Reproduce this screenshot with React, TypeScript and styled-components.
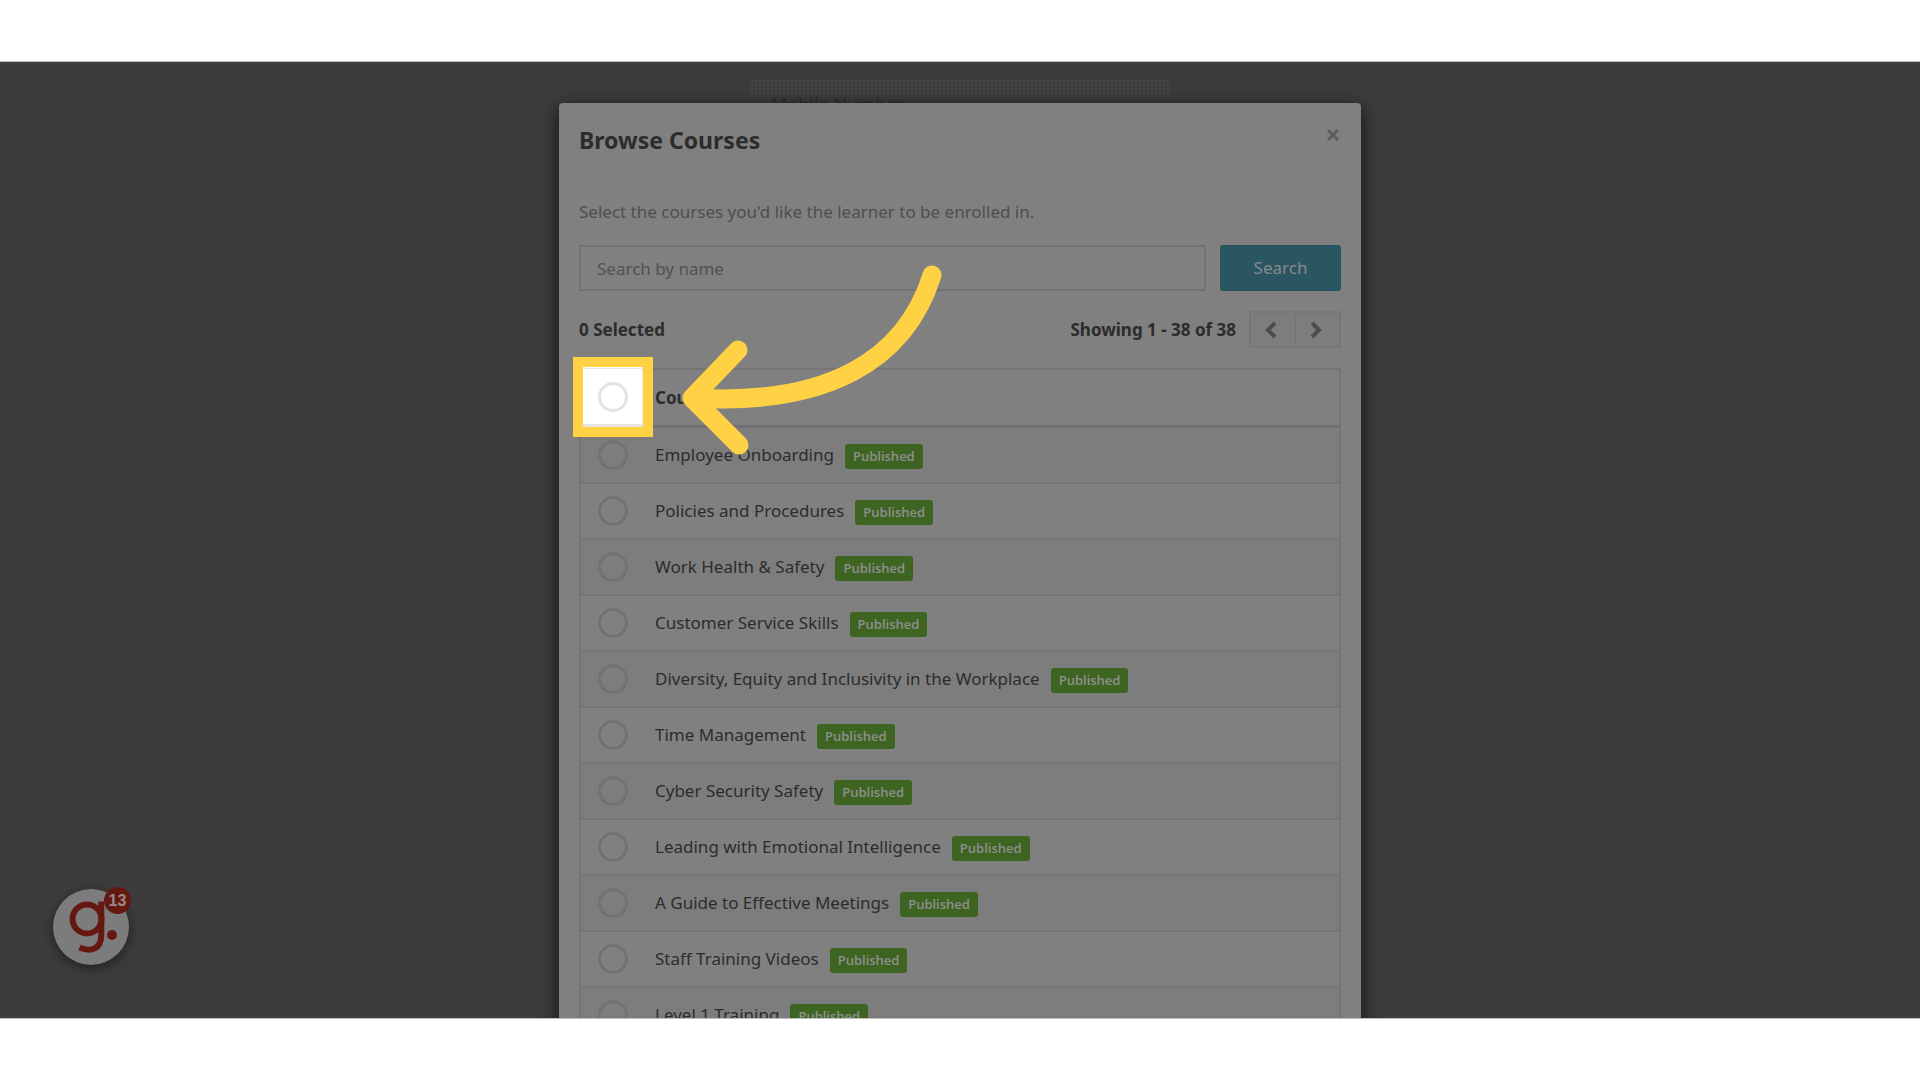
import React from "react";
import styled, { createGlobalStyle } from "styled-components";

const GlobalStyle = createGlobalStyle`
  *, *::before, *::after { box-sizing: border-box; }
  body {
    margin: 0;
    background: #ffffff;
    font-family: "Noto Sans", "Open Sans", sans-serif;
    font-size: 17px;
    line-height: 24px;
    color: #2c2c2c;
  }
`;

const Page = styled.main`
  height: 100vh;
  padding: 61px 0;
  overflow: hidden;
`;

const Stage = styled.div`
  position: relative;
  height: 100%;
  overflow: hidden;
  background: #3c3c3c;
  border-top: 1px solid #bdbdbd;
  border-bottom: 1px solid #bdbdbd;
`;

const Backdrop = styled.div`
  position: absolute;
  top: 18px;
  left: 50%;
  width: 418px;
  transform: translateX(-50%);
  color: #2c2c2c;
`;

const BackdropField = styled.div`
  height: 14px;
  background: radial-gradient(circle at 1px 1px, #494949 1px, transparent 1px) 0 0 / 4px 4px;
`;

const BackdropLabel = styled.div`
  padding: 0 20px;
  font-size: 18px;
  line-height: 20px;
`;

const Dialog = styled.section`
  position: relative;
  width: 802px;
  max-width: 100%;
  margin: 41px auto 0;
  padding: 20px;
  background: #808080;
  border-radius: 4px;
  box-shadow: 0 6px 18px 2px rgba(0, 0, 0, 0.6);
`;

const DialogHeader = styled.header`
  display: flex;
  justify-content: space-between;
  align-items: flex-start;
  height: 77px;
`;

const Title = styled.h1`
  margin: 0;
  font-size: 23px;
  line-height: 34px;
  font-weight: 700;
`;

const CloseButton = styled.button`
  width: 16px;
  height: 24px;
  padding: 0;
  border: 0;
  background: none;
  color: #5c5f58;
`;

const Intro = styled.p`
  margin: 0 0 21px;
  color: #4e4e4e;
`;

const SearchForm = styled.form`
  display: flex;
  gap: 14px;
  margin-bottom: 20px;
`;

const SearchInput = styled.input`
  flex: 1;
  min-width: 0;
  height: 46px;
  padding: 0 16px;
  border: 2px solid #727272;
  border-radius: 2px;
  background: transparent;
  font: inherit;
  color: #2c2c2c;
  &::placeholder { color: #515151; opacity: 1; }
`;

const SearchButton = styled.button`
  width: 121px;
  height: 46px;
  border: 0;
  border-radius: 3px;
  background: #2a5661;
  color: #898989;
  font: inherit;
`;

const Summary = styled.div`
  display: flex;
  align-items: center;
  justify-content: space-between;
  margin-bottom: 20px;
  font-weight: 700;
`;

const Paging = styled.div`
  display: flex;
  align-items: center;
  gap: 13px;
`;

const Pager = styled.div`
  display: flex;
  border: 2px solid #777777;
`;

const PagerButton = styled.button`
  display: flex;
  align-items: center;
  justify-content: center;
  width: 44px;
  height: 33px;
  padding: 0 4px 0 0;
  border: 0;
  background: #7d7d7d;
  color: #4c4c4c;
  & + & { border-left: 1px solid #747474; }
`;

const CourseTable = styled.table`
  width: 100%;
  border-collapse: separate;
  border-spacing: 0;
  border: 2px solid #757575;
  border-bottom: 0;
`;

const HeadCell = styled.th`
  height: 58px;
  padding: 0 0 0 12px;
  border-bottom: 3px solid #717171;
  text-align: left;
`;

const HeadSelectCell = styled(HeadCell)`
  position: relative;
  width: 62px;
`;

const Row = styled.tr`
  &:nth-child(odd) { background: #7d7d7d; }
`;

const Cell = styled.td`
  height: 56px;
  padding: 0 0 0 12px;
  border-bottom: 2px solid #757575;
`;

const SelectCell = styled(Cell)`
  padding-left: 17px;
`;

const Check = styled.input<{ $lit?: boolean }>`
  appearance: none;
  display: block;
  width: 30px;
  height: 30px;
  margin: 0;
  border: 3px solid ${(p) => (p.$lit ? "#e5e3db" : "#727272")};
  border-radius: 50%;
`;

const CourseLine = styled.div`
  display: flex;
  align-items: center;
  gap: 11px;
`;

const Badge = styled.span`
  height: 25px;
  margin-top: 3px;
  padding: 0 8px;
  border-radius: 3px;
  background: #3e6421;
  color: #8f8f8f;
  font-family: "Open Sans", "Noto Sans", sans-serif;
  font-size: 13px;
  line-height: 25px;
  font-weight: 600;
`;

const Spotlight = styled.div`
  position: absolute;
  z-index: 1;
  top: -13px;
  left: -8px;
  width: 80px;
  height: 80px;
  padding-top: 1px;
  border: 10px solid #ffd145;
  background: #ffffff;
`;

const SpotlightCell = styled.div`
  display: flex;
  align-items: center;
  justify-content: center;
  height: 59px;
  border-top: 1px solid #e8e8e8;
  border-right: 1px solid #e8e8e8;
  border-bottom: 3px solid #e6e3e0;
`;

const Arrow = styled.svg`
  position: absolute;
  z-index: 2;
  top: -106px;
  left: 100px;
  pointer-events: none;
`;

const ChatLauncher = styled.button`
  position: absolute;
  left: 53px;
  bottom: 53px;
  width: 76px;
  height: 76px;
  padding: 0;
  border: 0;
  border-radius: 50%;
  background: #7c7c7c;
  box-shadow: 0 3px 12px rgba(0, 0, 0, 0.5);
`;

const UnreadCount = styled.span`
  position: absolute;
  top: -2px;
  right: -2px;
  width: 27px;
  height: 27px;
  border-radius: 50%;
  background: #651812;
  color: #9a8a88;
  font: 700 16px/27px "Liberation Sans", Arial, sans-serif;
`;

const courses = [
  "Employee Onboarding",
  "Policies and Procedures",
  "Work Health & Safety",
  "Customer Service Skills",
  "Diversity, Equity and Inclusivity in the Workplace",
  "Time Management",
  "Cyber Security Safety",
  "Leading with Emotional Intelligence",
  "A Guide to Effective Meetings",
  "Staff Training Videos",
  "Level 1 Training",
];

function CloseIcon() {
  return (
    <svg width="14" height="14" viewBox="0 0 14 14" aria-hidden="true">
      <path d="M2 3l10 10M12 3L2 13" stroke="currentColor" strokeWidth="3" />
    </svg>
  );
}

function Chevron({ direction }: { direction: "left" | "right" }) {
  return (
    <svg width="12" height="18" viewBox="0 0 12 18" aria-hidden="true">
      <path
        d={direction === "left" ? "M10 2L3 9l7 7" : "M2 2l7 7-7 7"}
        fill="none"
        stroke="currentColor"
        strokeWidth="4"
      />
    </svg>
  );
}

function GuideArrow() {
  return (
    <Arrow width="262" height="192" viewBox="0 0 262 192" aria-hidden="true">
      <g fill="none" stroke="#ffd145" strokeWidth="19" strokeLinecap="round" strokeLinejoin="round">
        <path d="M251 11C224 98 144 142 12 134" />
        <path d="M57 86L11 134L58 181" />
      </g>
    </Arrow>
  );
}

function BrandMark() {
  return (
    <svg width="76" height="76" viewBox="0 0 76 76" aria-hidden="true">
      <g fill="none" stroke="#651812" strokeWidth="6">
        <circle cx="34" cy="30" r="14.5" />
        <path d="M48.3 12.5V46C48.3 60 38 63.5 26.5 58.5" />
      </g>
      <circle cx="59" cy="46" r="5" fill="#651812" />
    </svg>
  );
}

export default function App() {
  return (
    <>
      <GlobalStyle />
      <Page>
        <Stage>
          <Backdrop>
            <BackdropField />
            <BackdropLabel>Mobile Number</BackdropLabel>
          </Backdrop>
          <Dialog aria-labelledby="dialog-title">
            <DialogHeader>
              <Title id="dialog-title">Browse Courses</Title>
              <CloseButton aria-label="Close">
                <CloseIcon />
              </CloseButton>
            </DialogHeader>
            <Intro>Select the courses you'd like the learner to be enrolled in.</Intro>
            <SearchForm onSubmit={(e) => e.preventDefault()}>
              <SearchInput type="text" aria-label="Search by name" placeholder="Search by name" />
              <SearchButton type="submit">Search</SearchButton>
            </SearchForm>
            <Summary>
              <span>0 Selected</span>
              <Paging>
                <span>Showing 1 - 38 of 38</span>
                <Pager>
                  <PagerButton aria-label="Previous page">
                    <Chevron direction="left" />
                  </PagerButton>
                  <PagerButton aria-label="Next page">
                    <Chevron direction="right" />
                  </PagerButton>
                </Pager>
              </Paging>
            </Summary>
            <CourseTable>
              <thead>
                <tr>
                  <HeadSelectCell>
                    <Spotlight>
                      <SpotlightCell>
                        <Check $lit type="checkbox" aria-label="Select all courses" />
                      </SpotlightCell>
                    </Spotlight>
                    <GuideArrow />
                  </HeadSelectCell>
                  <HeadCell>Course</HeadCell>
                </tr>
              </thead>
              <tbody>
                {courses.map((name, i) => (
                  <Row key={name}>
                    <SelectCell>
                      <Check type="checkbox" id={`course-${i}`} />
                    </SelectCell>
                    <Cell>
                      <CourseLine>
                        <label htmlFor={`course-${i}`}>{name}</label>
                        <Badge>Published</Badge>
                      </CourseLine>
                    </Cell>
                  </Row>
                ))}
              </tbody>
            </CourseTable>
          </Dialog>
          <ChatLauncher aria-label="Open help, 13 unread">
            <BrandMark />
            <UnreadCount>13</UnreadCount>
          </ChatLauncher>
        </Stage>
      </Page>
    </>
  );
}
